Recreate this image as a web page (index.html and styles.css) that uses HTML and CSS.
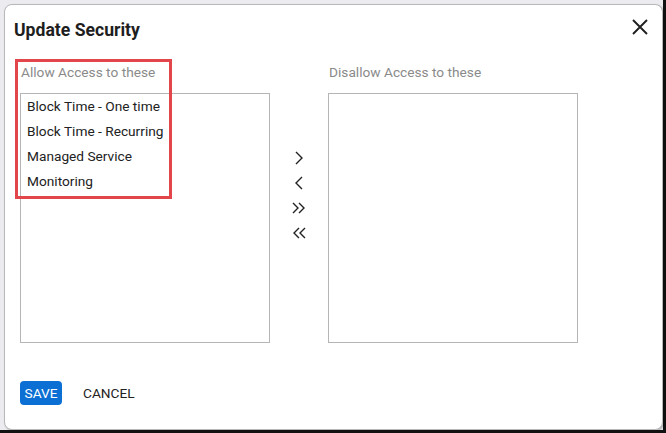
FILE: index.html
```html
<!DOCTYPE html>
<html lang="en">
<head>
    <meta charset="UTF-8">
    <title>Update Security</title>
    <link rel="stylesheet" href="styles.css">
</head>
<body>
    <div class="screen">
        <div class="dialog">
            <!-- Header -->
            <div class="dialog-header">
                <h1>Update Security</h1>
                <button class="close-btn" aria-label="Close">
                    <svg width="16" height="16" viewBox="0 0 16 16"><path d="M1 1 L15 15 M15 1 L1 15" stroke="#1f1f1f" stroke-width="1.9" fill="none"/></svg>
                </button>
            </div>

            <!-- Two lists with move buttons -->
            <div class="lists">
                <div class="list-col">
                    <div class="list-label">Allow Access to these</div>
                    <ul class="listbox">
                        <li>Block Time - One time</li>
                        <li>Block Time - Recurring</li>
                        <li>Managed Service</li>
                        <li>Monitoring</li>
                    </ul>
                </div>

                <div class="move-col">
                    <button class="move-btn" aria-label="Move right">
                        <svg width="12" height="16" viewBox="0 0 12 16"><path d="M3 2 L9 8 L3 14" stroke="#222" stroke-width="1.4" fill="none"/></svg>
                    </button>
                    <button class="move-btn" aria-label="Move left">
                        <svg width="12" height="16" viewBox="0 0 12 16"><path d="M9 2 L3 8 L9 14" stroke="#222" stroke-width="1.4" fill="none"/></svg>
                    </button>
                    <button class="move-btn" aria-label="Move all right">
                        <svg width="16" height="16" viewBox="0 0 16 16"><path d="M2 3 L7 8 L2 13 M8 3 L13 8 L8 13" stroke="#222" stroke-width="1.4" fill="none"/></svg>
                    </button>
                    <button class="move-btn" aria-label="Move all left">
                        <svg width="16" height="16" viewBox="0 0 16 16"><path d="M8 3 L3 8 L8 13 M14 3 L9 8 L14 13" stroke="#222" stroke-width="1.4" fill="none"/></svg>
                    </button>
                </div>

                <div class="list-col">
                    <div class="list-label">Disallow Access to these</div>
                    <ul class="listbox"></ul>
                </div>
            </div>

            <!-- Footer -->
            <div class="dialog-footer">
                <button class="btn-save">SAVE</button>
                <button class="btn-cancel">CANCEL</button>
            </div>

            <!-- Highlight annotation -->
            <div class="highlight"></div>
        </div>
    </div>
</body>
</html>
```

FILE: styles.css
```css
/* Page reset */
html, body {
    margin: 0;
    padding: 0;
    background: #111;
    font-family: Roboto, "Liberation Sans", Arial, sans-serif;
}

/* Grey backdrop behind the dialog */
.screen {
    width: 663px;
    height: 430px;
    box-sizing: border-box;
    padding: 4px 0 0 4px;
    background: #ebebf0;
}

.dialog {
    position: relative;
    width: 659px;
    height: 426px;
    box-sizing: border-box;
    background: #fff;
    border: 1px solid #b8b8b8;
    border-radius: 8px;
    box-shadow: 1px 1px 2px rgba(0, 0, 0, 0.25);
}

.dialog-header {
    display: flex;
    justify-content: space-between;
    align-items: flex-start;
    padding: 14px 14px 0 9px;
}

.dialog-header h1 {
    margin: 0;
    font-size: 17.6px;
    line-height: 22px;
    font-weight: 700;
    color: #1e1e1e;
}

.close-btn {
    border: none;
    background: none;
    padding: 0;
    width: 16px;
    height: 16px;
    cursor: pointer;
}

.close-btn svg {
    display: block;
}

/* Lists */
.lists {
    display: flex;
    padding: 23px 0 0 15px;
}

.list-col {
    width: 250px;
}

.list-label {
    font-size: 13.7px;
    line-height: 16px;
    color: #8a8a8a;
    padding-left: 1px;
    margin-bottom: 13px;
}

.listbox {
    list-style: none;
    margin: 0;
    padding: 0;
    width: 250px;
    height: 250px;
    box-sizing: border-box;
    border: 1px solid #b5b5b5;
}

.listbox li {
    font-size: 13.7px;
    line-height: 25px;
    color: #222;
    padding-left: 6px;
}

.move-col {
    width: 58px;
    display: flex;
    flex-direction: column;
    align-items: center;
    gap: 9px;
    padding-top: 86px;
}

.move-btn {
    border: none;
    background: none;
    padding: 0;
    height: 16px;
    display: flex;
    justify-content: center;
    cursor: pointer;
}

.move-btn svg {
    display: block;
}

/* Footer */
.dialog-footer {
    display: flex;
    align-items: center;
    gap: 21px;
    padding: 38px 0 0 15px;
}

.btn-save {
    background: #0b6fd3;
    color: #fff;
    border: none;
    border-radius: 4px;
    height: 24px;
    width: 42px;
    padding: 0;
    font-family: inherit;
    font-size: 13.7px;
    cursor: pointer;
}

.btn-cancel {
    background: none;
    border: none;
    padding: 0;
    font-family: inherit;
    font-size: 13.7px;
    color: #222;
    cursor: pointer;
}

/* Red annotation frame */
.highlight {
    position: absolute;
    left: 10px;
    top: 54px;
    width: 157px;
    height: 140px;
    box-sizing: border-box;
    border: 3px solid #e2464b;
    pointer-events: none;
}
```
